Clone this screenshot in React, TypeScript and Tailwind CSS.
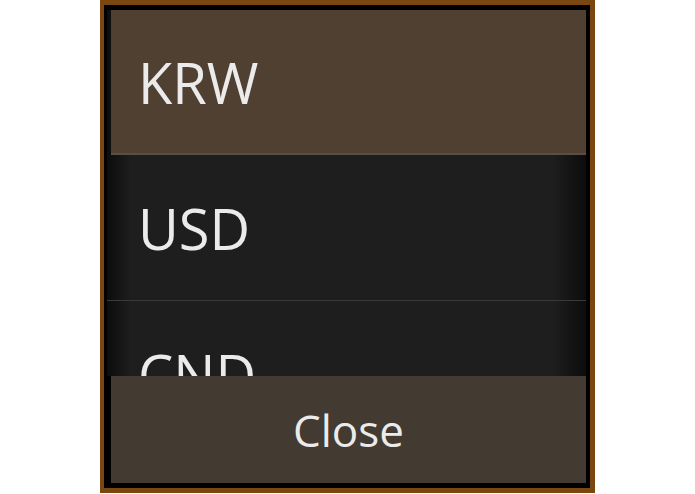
const rows = ["KRW", "USD", "CND"];

export default function App() {
  return (
    <div className="w-[695px] h-[494px] bg-white flex justify-center" style={{ fontFamily: '"Open Sans", "Noto Sans", sans-serif' }}>
      <div className="w-[495px] h-[493px] border-[#7a4710] border-l-[4px] border-t-[5px] border-r-[5px] border-b-[5px] bg-black">
        <div className="h-full flex flex-col border-black border-l-[3px] border-r-[4px] border-t-[5px] border-b-[5px]">
          {/* currency list */}
          <div className="h-[366px] overflow-hidden bg-[linear-gradient(to_right,#0c0c0c_0%,#1e1e1e_5%,#1e1e1e_93%,#0c0c0c_100%)]">
            {rows.map((code, i) => (
              <div
                key={code}
                className={
                  i === 0
                    ? "h-[145px] ml-1 flex items-center pl-[27px] bg-[#4f4032] border-b-[2px] border-[#5a4f45]"
                    : "h-[146px] flex items-center pl-[31px] border-b border-[#3a3a3a]"
                }
              >
                <span className="text-[56px] leading-none text-[#ebebeb]">{code}</span>
              </div>
            ))}
          </div>
          <button className="ml-1 h-[107px] bg-[#433a31] text-[#ebebeb] text-[44px] leading-none flex items-center justify-center">
            Close
          </button>
        </div>
      </div>
    </div>
  );
}
